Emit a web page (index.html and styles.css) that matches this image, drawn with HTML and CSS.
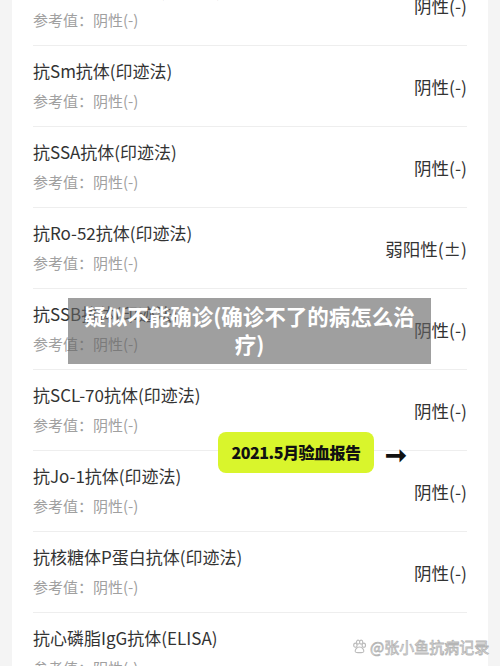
FILE: index.html
```html
<!DOCTYPE html>
<html>
<head>
<meta http-equiv="Content-Type" content="text/html; charset=utf-8">
<title>疑似不能确诊</title>
<link rel="stylesheet" href="styles.css">
</head>
<body>
<div class="page">
  <div class="card">
    <div class="row">
      <div class="info"><div class="name">抗nRNP/Sm抗体(印迹法)</div><div class="ref">参考值：阴性(-)</div></div>
      <div class="result">阴性(-)</div>
    </div>
    <div class="row">
      <div class="info"><div class="name">抗Sm抗体(印迹法)</div><div class="ref">参考值：阴性(-)</div></div>
      <div class="result">阴性(-)</div>
    </div>
    <div class="row">
      <div class="info"><div class="name">抗SSA抗体(印迹法)</div><div class="ref">参考值：阴性(-)</div></div>
      <div class="result">阴性(-)</div>
    </div>
    <div class="row">
      <div class="info"><div class="name">抗Ro-52抗体(印迹法)</div><div class="ref">参考值：阴性(-)</div></div>
      <div class="result">弱阳性(±)</div>
    </div>
    <div class="row">
      <div class="info"><div class="name">抗SSB抗体(印迹法)</div><div class="ref">参考值：阴性(-)</div></div>
      <div class="result">阴性(-)</div>
    </div>
    <div class="row">
      <div class="info"><div class="name">抗SCL-70抗体(印迹法)</div><div class="ref">参考值：阴性(-)</div></div>
      <div class="result">阴性(-)</div>
    </div>
    <div class="row">
      <div class="info"><div class="name">抗Jo-1抗体(印迹法)</div><div class="ref">参考值：阴性(-)</div></div>
      <div class="result">阴性(-)</div>
    </div>
    <div class="row">
      <div class="info"><div class="name">抗核糖体P蛋白抗体(印迹法)</div><div class="ref">参考值：阴性(-)</div></div>
      <div class="result">阴性(-)</div>
    </div>
    <div class="row">
      <div class="info"><div class="name">抗心磷脂IgG抗体(ELISA)</div><div class="ref">参考值：阴性(-)</div></div>
    </div>
  </div>

  <div class="banner">疑似不能确诊(确诊不了的病怎么治疗)</div>

  <div class="tag">
    <span class="pill">2021.5月验血报告</span>
    <span class="arrow">&#10142;</span>
  </div>

  <div class="mark">
    <svg width="15" height="16" viewBox="0 0 16 16">
      <g fill="#fff" stroke="#bbb" stroke-width="1.2">
        <ellipse cx="3.6" cy="6" rx="1.8" ry="2.2"/>
        <ellipse cx="6.5" cy="2.8" rx="1.7" ry="2.1"/>
        <ellipse cx="9.8" cy="2.8" rx="1.7" ry="2.1"/>
        <ellipse cx="12.6" cy="6" rx="1.8" ry="2.2"/>
        <path d="M8 8 C5 8 3 11 3.5 13 C4 14.5 6 14 8 14 C10 14 12 14.5 12.5 13 C13 11 11 8 8 8 Z"/>
      </g>
    </svg>
    <span>@张小鱼抗病记录</span>
  </div>
</div>
</body>
</html>
```
FILE: styles.css
```css
body {
  margin: 0;
  background-color: #f4f4f4;
  font-family: "Noto Sans CJK SC", "Noto Sans", sans-serif;
  overflow: hidden;
}
.page {
  position: relative;
  height: 666px;
  padding: 0 12px;
  overflow: hidden;
}
.card {
  background-color: white;
  margin-top: -35px;
  padding: 0 21px;
}
.row {
  display: flex;
  align-items: center;
  justify-content: space-between;
  height: 80px;
  border-bottom: 1px solid #eeeeee;
}
.info { padding-bottom: 2px; }
.name {
  font-size: 17px;
  line-height: 24px;
  color: #333;
}
.ref {
  margin-top: 8px;
  font-size: 15px;
  line-height: 20px;
  color: #a0a0a0;
}
.result {
  font-size: 17.5px;
  color: #333;
}

/* overlays on the screenshot */
.banner {
  position: absolute;
  left: 68px;
  top: 298px;
  width: 335px;
  padding: 4px 14px 6px;
  background-color: rgba(100, 100, 100, 0.62);
  color: white;
  font-weight: bold;
  font-size: 21.5px;
  line-height: 28px;
  text-align: center;
}
.tag {
  position: absolute;
  left: 218px;
  top: 432px;
  display: flex;
  align-items: center;
}
.pill {
  width: 156px;
  height: 41px;
  line-height: 41px;
  text-align: center;
  background-color: #d9f52c;
  border-radius: 8px;
  font-weight: 900;
  font-size: 16px;
  letter-spacing: -0.5px;
  color: #111;
}
.arrow {
  margin-left: 11px;
  font-size: 26px;
  font-weight: bold;
  color: #111;
}
.mark {
  position: absolute;
  left: 352px;
  top: 636px;
  display: flex;
  align-items: center;
  gap: 3px;
  white-space: nowrap;
  font-size: 15px;
  color: #fff;
  -webkit-text-stroke: 0.8px #b5b5b5;
}
```
